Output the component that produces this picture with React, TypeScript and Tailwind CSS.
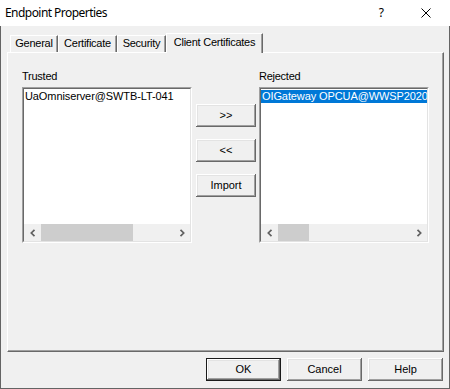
import React from "react";

const btn3d =
  "shadow-[inset_-1px_-1px_0_#696969,inset_1px_1px_0_#ffffff,inset_-2px_-2px_0_#a0a0a0,inset_2px_2px_0_#e3e3e3]";

function Chevron({ dir }: { dir: "left" | "right" }) {
  return (
    <svg width="8" height="8" viewBox="0 0 8 8">
      <polyline
        points={dir === "left" ? "5.5,0.8 2.3,4 5.5,7.2" : "2.5,0.8 5.7,4 2.5,7.2"}
        fill="none"
        stroke="#606060"
        strokeWidth="1.7"
      />
    </svg>
  );
}

function ListBox({
  item,
  selected,
  thumb,
}: {
  item: string;
  selected?: boolean;
  thumb: string;
}) {
  return (
    <div className="h-[156px] w-[170px] border border-t-[#a0a0a0] border-l-[#a0a0a0] border-b-white border-r-white">
      <div className="flex h-full flex-col border border-t-[#696969] border-l-[#696969] border-b-[#e3e3e3] border-r-[#e3e3e3] bg-white">
        <div className="flex-1 overflow-hidden pt-px">
          <div
            className={`h-[13px] whitespace-nowrap pl-[1px] text-[11px] leading-[13px] tracking-[-0.1px] ${
              selected ? "bg-[#0078d7] text-white" : "text-black"
            }`}
          >
            {item}
          </div>
        </div>
        <div className="flex h-[17px] bg-[#f0f0f0]">
          <div className="flex w-[17px] items-center justify-center">
            <Chevron dir="left" />
          </div>
          <div className={`${thumb} bg-[#cdcdcd]`} />
          <div className="flex-1" />
          <div className="flex w-[17px] items-center justify-center">
            <Chevron dir="right" />
          </div>
        </div>
      </div>
    </div>
  );
}

function Button({ label, wide, isDefault }: { label: string; wide?: boolean; isDefault?: boolean }) {
  return (
    <button
      className={`${wide ? "w-[75px]" : "w-[60px]"} h-[23px] bg-[#f0f0f0] text-[11px] leading-[13px] tracking-normal text-black ${btn3d} ${
        isDefault ? "border border-[#1a1a1a]" : ""
      }`}
    >
      {label}
    </button>
  );
}

const tabs = [
  { label: "General", w: "w-[48px]" },
  { label: "Certificate", w: "w-[59px]" },
  { label: "Security", w: "w-[49px]" },
];

export default function App() {
  return (
    <div className="relative flex h-[389px] w-[450px] flex-col overflow-hidden bg-[#f0f0f0] font-['Liberation_Sans',Arial,sans-serif] text-[11px] tracking-[-0.25px] text-black shadow-[inset_1px_0_0_#646464,inset_-1px_0_0_#646464,inset_0_-1px_0_#646464]">
      {/* Title bar */}
      <div className="flex h-[26px] shrink-0 items-center bg-white pl-[5px] font-['Noto_Sans',sans-serif] text-[12px] leading-[16px] tracking-normal">
        <span className="tracking-[-0.55px]">Endpoint Properties</span>
        <span className="ml-auto">?</span>
        <svg className="ml-[37px] mr-[19px]" width="10" height="10" viewBox="0 0 10 10">
          <path d="M0.5 0.5 L9.5 9.5 M9.5 0.5 L0.5 9.5" stroke="#000" strokeWidth="1" />
        </svg>
      </div>

      {/* Tabs */}
      <div className="mt-[7px] flex h-[19px] items-end pl-[10px]">
        {tabs.map((t) => (
          <div
            key={t.label}
            className={`${t.w} h-[17px] border-l border-t border-r border-white border-r-[#696969] pt-px text-center leading-[13px] shadow-[inset_-1px_0_0_#a0a0a0]`}
          >
            {t.label}
          </div>
        ))}
        <div className="relative z-10 -mb-px h-[20px] w-[97px] border-l border-t border-r border-white border-r-[#696969] bg-[#f0f0f0] pt-[2px] text-center leading-[13px] shadow-[inset_-1px_0_0_#a0a0a0]">
          Client Certificates
        </div>
      </div>

      {/* Panel */}
      <div className="ml-[7px] flex h-[300px] w-[437px] border-l border-t border-r border-b border-white border-r-[#696969] border-b-[#696969] pl-[14px] pt-[17px] shadow-[inset_-1px_-1px_0_#a0a0a0]">
        <div className="flex w-[170px] flex-col">
          <div className="h-[13px] leading-[13px]">Trusted</div>
          <div className="mt-[4px]">
            <ListBox item="UaOmniserver@SWTB-LT-041" thumb="w-[92px]" />
          </div>
        </div>
        <div className="ml-[4px] flex w-[60px] flex-col gap-[12px] pt-[34px]">
          <Button label=">>" />
          <Button label="<<" />
          <Button label="Import" />
        </div>
        <div className="ml-[3px] flex w-[170px] flex-col">
          <div className="h-[13px] leading-[13px]">Rejected</div>
          <div className="mt-[4px]">
            <ListBox item="OIGateway OPCUA@WWSP2020" selected thumb="w-[31px]" />
          </div>
        </div>
      </div>

      {/* Footer buttons */}
      <div className="mt-[6px] flex justify-end gap-[6px] pr-[7px]">
        <Button label="OK" wide isDefault />
        <Button label="Cancel" wide />
        <Button label="Help" wide />
      </div>
    </div>
  );
}
